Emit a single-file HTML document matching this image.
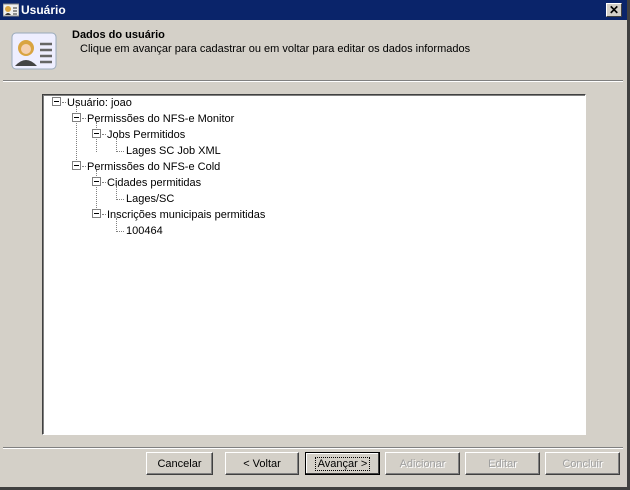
<html><head><style>
body{margin:0;width:630px;height:490px;background:#d4d0c8;font-family:"Liberation Sans",sans-serif;font-size:11px;position:relative;overflow:hidden}
.a{position:absolute}
.btn{position:absolute;top:452px;height:23px;box-sizing:border-box;border:1px solid;border-color:#fff #404040 #404040 #fff;box-shadow:inset -1px -1px #808080;text-align:center;line-height:22px;color:#000}
.dis{color:#a0a0a0;text-shadow:1px 1px #fff}
.t{position:absolute;white-space:nowrap;line-height:13px;margin-top:1px}
.bx{position:absolute;width:7px;height:7px;border:1px solid #808080;background:#fff}
.bx:after{content:"";position:absolute;left:1px;top:3px;width:5px;height:1px;background:#000}
.dv{position:absolute;border-left:1px dotted #808080}
.dh{position:absolute;border-top:1px dotted #808080}
</style></head><body>
<div class="a" style="left:0;top:0;width:627px;height:20px;background:#0a246a"></div>
<svg class="a" style="left:3px;top:3px" width="16" height="14"><rect x="0" y="1" width="16" height="12" fill="#eee" stroke="#888"/><circle cx="5" cy="6" r="3" fill="#d9a441"/><path d="M2 12 Q5 8 8 12" fill="#333"/><path d="M10 5h4M10 8h4M10 11h4" stroke="#333"/></svg>
<div class="a" style="left:21px;top:3px;color:#fff;font-weight:bold;font-size:12px">Usuário</div>
<div class="a" style="left:606px;top:3px;width:16px;height:14px;box-sizing:border-box;background:#d4d0c8;border:1px solid;border-color:#fff #404040 #404040 #fff;text-align:center;line-height:12px;font-weight:bold;font-size:12px">✕</div>
<div class="a" style="left:627px;top:0;width:3px;height:490px;background:#404040"></div>
<div class="a" style="left:0;top:487px;width:630px;height:3px;background:#404040"></div>
<svg class="a" style="left:10px;top:30px" width="48" height="42"><rect x="2" y="3" width="44" height="36" rx="4" fill="#eef" stroke="#9ab"/><circle cx="16" cy="18" r="8" fill="#d9a441"/><circle cx="16" cy="19" r="5" fill="#f4d0b0"/><path d="M5 36 Q16 24 27 36" fill="#444"/><path d="M30 14h12M30 20h12M30 26h12M30 32h12" stroke="#666" stroke-width="2.5"/></svg>
<div class="a" style="left:72px;top:29px;font-weight:bold">Dados do usuário</div>
<div class="a" style="left:80px;top:43px">Clique em avançar para cadastrar ou em voltar para editar os dados informados</div>
<div class="a" style="left:3px;top:80px;width:620px;height:1px;background:#808080;border-bottom:1px solid #fff"></div>
<div class="a" style="left:42px;top:94px;width:544px;height:341px;box-sizing:border-box;background:#fff;border:1px solid;border-color:#404040 #fff #fff #404040;box-shadow:inset 1px 1px #808080"></div>
<div class="dv" style="left:76px;top:106px;height:62px"></div>
<div class="dv" style="left:96px;top:122px;height:30px"></div>
<div class="dv" style="left:116px;top:138px;height:14px"></div>
<div class="dh" style="left:116px;top:151px;width:8px"></div>
<div class="dv" style="left:96px;top:170px;height:46px"></div>
<div class="dv" style="left:116px;top:186px;height:14px"></div>
<div class="dh" style="left:116px;top:199px;width:8px"></div>
<div class="dv" style="left:116px;top:218px;height:14px"></div>
<div class="dh" style="left:116px;top:231px;width:8px"></div>
<div class="bx" style="left:52px;top:97px"></div><div class="dh" style="left:62px;top:102px;width:4px"></div><div class="t" style="left:67px;top:96px">Usuário: joao</div>
<div class="bx" style="left:72px;top:113px"></div><div class="dh" style="left:82px;top:118px;width:4px"></div><div class="t" style="left:87px;top:112px">Permissões do NFS-e Monitor</div>
<div class="bx" style="left:92px;top:129px"></div><div class="dh" style="left:102px;top:134px;width:4px"></div><div class="t" style="left:107px;top:128px">Jobs Permitidos</div>
<div class="t" style="left:126px;top:144px">Lages SC Job XML</div>
<div class="bx" style="left:72px;top:161px"></div><div class="dh" style="left:82px;top:166px;width:4px"></div><div class="t" style="left:87px;top:160px">Permissões do NFS-e Cold</div>
<div class="bx" style="left:92px;top:177px"></div><div class="dh" style="left:102px;top:182px;width:4px"></div><div class="t" style="left:107px;top:176px">Cidades permitidas</div>
<div class="t" style="left:126px;top:192px">Lages/SC</div>
<div class="bx" style="left:92px;top:209px"></div><div class="dh" style="left:102px;top:214px;width:4px"></div><div class="t" style="left:107px;top:208px">Inscrições municipais permitidas</div>
<div class="t" style="left:126px;top:224px">100464</div>
<div class="a" style="left:3px;top:447px;width:620px;height:1px;background:#808080;border-bottom:1px solid #fff"></div>
<div class="btn" style="left:146px;width:67px">Cancelar</div>
<div class="btn" style="left:225px;width:74px">&lt; Voltar</div>
<div class="btn" style="left:305px;width:75px;border:1px solid #000;box-shadow:inset -1px -1px #404040,inset 1px 1px #fff"><span style="border:1px dotted #000;padding:0 2px">Avançar &gt;</span></div>
<div class="btn dis" style="left:385px;width:75px">Adicionar</div>
<div class="btn dis" style="left:465px;width:75px">Editar</div>
<div class="btn dis" style="left:545px;width:75px">Concluir</div>
</body></html>
